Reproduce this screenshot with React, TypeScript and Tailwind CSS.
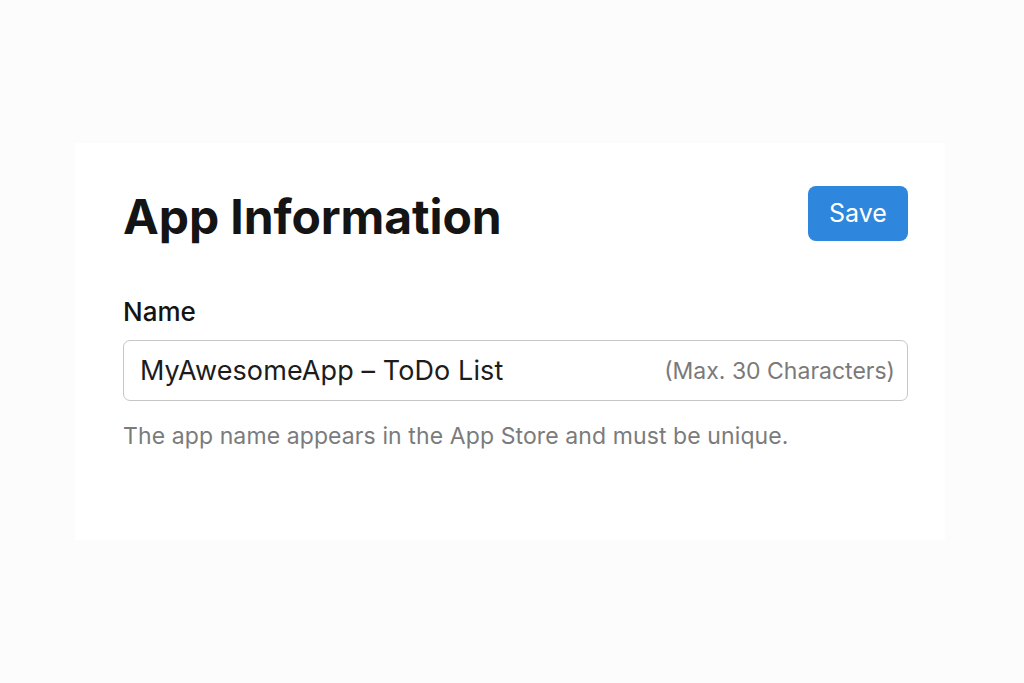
export default function App() {
  return (
    <div
      className="w-[1024px] h-[683px] bg-[#fcfcfc] pl-[75px] pt-[143px]"
      style={{ fontFamily: 'Inter, "Noto Sans", sans-serif' }}
    >
      <div className="w-[870px] h-[397px] bg-white pl-[48px] pr-[37px] pt-[43px]">
        <div className="flex items-start justify-between">
          <h1 className="text-[48px] leading-[62px] font-bold text-[#141414] tracking-[-0.1px]">
            App Information
          </h1>
          <button className="w-[100px] h-[55px] rounded-[8px] bg-[#2f86dd] text-white text-[25px]">
            Save
          </button>
        </div>
        <div className="mt-[50px] text-[26px] leading-[28px] font-medium text-[#141414]">Name</div>
        <div className="mt-[14px] h-[61px] border border-[#c6c6c6] rounded-[7px] flex items-center justify-between pl-[16px] pr-[12px]">
          <span className="text-[27px] text-[#1c1c1c] tracking-[0.1px] mt-[2px]">MyAwesomeApp – ToDo List</span>
          <span className="text-[23px] text-[#7a7a7a] mt-[2px]">(Max. 30 Characters)</span>
        </div>
        <p className="mt-[18px] text-[23px] text-[#7b7b7b] tracking-[0.1px]">
          The app name appears in the App Store and must be unique.
        </p>
      </div>
    </div>
  );
}
